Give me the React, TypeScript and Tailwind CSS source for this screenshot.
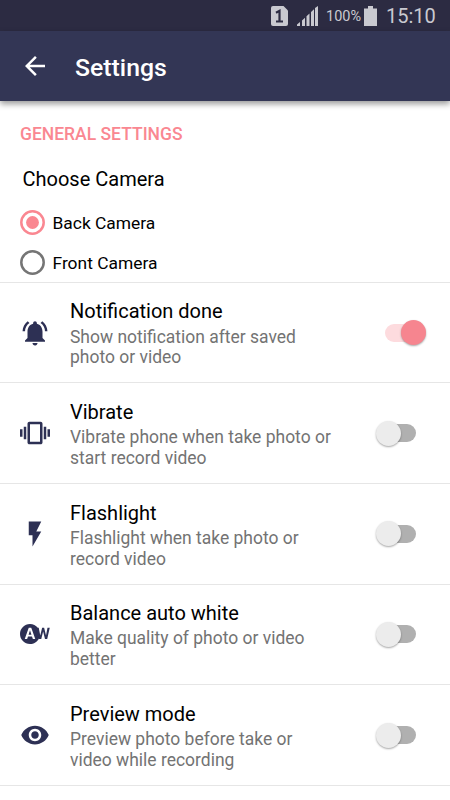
import { useState } from "react";
import type { IconType } from "react-icons";
import {
  MdArrowBack,
  MdFlashOn,
  MdNotificationsActive,
  MdVibration,
  MdVisibility,
  MdWbAuto,
} from "react-icons/md";

type Setting = {
  id: string;
  title: string;
  lines: [string, string];
  icon: IconType;
};

const settings: Setting[] = [
  { id: "notification", title: "Notification done", lines: ["Show notification after saved", "photo or video"], icon: MdNotificationsActive },
  { id: "vibrate", title: "Vibrate", lines: ["Vibrate phone when take photo or", "start record video"], icon: MdVibration },
  { id: "flash", title: "Flashlight", lines: ["Flashlight when take photo or", "record video"], icon: MdFlashOn },
  { id: "white", title: "Balance auto white", lines: ["Make quality of photo or video", "better"], icon: MdWbAuto },
  { id: "preview", title: "Preview mode", lines: ["Preview photo before take or", "video while recording"], icon: MdVisibility },
];

const StatusBar = () => (
  <div className="flex h-[31px] items-center bg-[#2c2b42] pl-[271px] text-[#c9c9d0]">
    {/* SIM slot */}
    <svg className="shrink-0" width="17" height="20" viewBox="0 0 17 20">
      <path d="M2 0h10.5L17 4.5V18a2 2 0 0 1-2 2H2a2 2 0 0 1-2-2V2a2 2 0 0 1 2-2z" fill="currentColor" />
      <path d="M5 6.8L8.5 4.8V15.500M5 15.500H12" fill="none" stroke="#2c2b42" strokeWidth="2.2" />
    </svg>
    <svg className="ml-[9px] shrink-0" width="22" height="20" viewBox="0 0 22 20" fill="currentColor">
      <path d="M0 20v-1.500l3-2.500V20zM5 20v-5.500l3-2.800V20zM9.500 20v-9.800l3-2.800V20zM14 20V6l3-2.800V20zM18 20V2L21 0v20z" />
    </svg>
    <span className="ml-[7px] w-[35px] shrink-0 whitespace-nowrap pt-[2px] text-[14.5px] leading-[29px]">100%</span>
    <svg className="ml-[3px] shrink-0" width="13" height="20" viewBox="0 0 13 20" fill="currentColor">
      <path d="M4 0h5v2.500h4V20H0V2.500h4z" />
    </svg>
    <span className="ml-[9px] whitespace-nowrap pt-px text-[20px] leading-[30px]">15:10</span>
  </div>
);

const Radio = ({ label, checked, onSelect }: { label: string; checked: boolean; onSelect: () => void }) => (
  <button type="button" role="radio" aria-checked={checked} onClick={onSelect} className="flex h-10 items-center pl-5">
    <svg
      className={`size-[25px] ${checked ? "text-[#fa8791]" : "text-[#757575]"}`}
      viewBox="0 0 25 25"
      fill="none"
      stroke="currentColor"
      strokeWidth="2.500"
    >
      <circle cx="12.500" cy="12.500" r="11.200" />
      {checked && <circle cx="12.500" cy="12.500" r="6.400" fill="currentColor" stroke="none" />}
    </svg>
    <span className="ml-[7.5px] pt-[2px] text-[17.4px] leading-5 text-black">{label}</span>
  </button>
);

const Switch = ({ label, on, onToggle }: { label: string; on: boolean; onToggle: () => void }) => (
  <button
    type="button"
    role="switch"
    aria-label={label}
    aria-checked={on}
    onClick={onToggle}
    className={`mr-6 flex h-[26px] w-[52px] items-center ${on ? "justify-end" : "justify-start"}`}
  >
    <span
      className={`flex h-[18px] w-[32px] items-center rounded-full ${
        on ? "mr-[9px] justify-end bg-[#fddbde]" : "ml-[10px] justify-start bg-[#b0b0b0]"
      }`}
    >
      <span
        className={`size-[25px] shrink-0 rounded-full shadow-[0_1px_2px_rgba(0,0,0,0.35)] ${
          on ? "-mr-[9px] bg-[#f6858f]" : "-ml-[8px] bg-[#ececec]"
        }`}
      />
    </span>
  </button>
);

export default function App() {
  const [camera, setCamera] = useState("back");
  const [enabled, setEnabled] = useState<Record<string, boolean>>({ notification: true });

  return (
    <div className="flex h-[800px] w-[450px] flex-col overflow-hidden bg-white font-['Roboto',sans-serif]">
      <StatusBar />
      <header className="z-10 flex h-[70px] shrink-0 items-center bg-[#333655] text-white shadow-[0_3px_6px_rgba(0,0,0,0.4)]">
        <MdArrowBack className="ml-5 size-[30px]" />
        <h1 className="ml-[25px] pt-[3px] text-[24.8px] font-medium leading-[30px]">Settings</h1>
      </header>

      <section className="flex h-[181.7px] shrink-0 flex-col border-b border-[#e6e6e6] pt-[23px]">
        <h2 className="pl-5 text-[17.5px] font-medium leading-5 text-[#fa8791]">GENERAL SETTINGS</h2>
        <h3 className="mb-[11px] mt-[23px] pl-[22.5px] text-[20px] leading-6 text-black">Choose Camera</h3>
        <div role="radiogroup" className="flex flex-col">
          <Radio label="Back Camera" checked={camera === "back"} onSelect={() => setCamera("back")} />
          <Radio label="Front Camera" checked={camera === "front"} onSelect={() => setCamera("front")} />
        </div>
      </section>

      {settings.map(({ id, title, lines, icon: Icon }) => (
        <div key={id} className="flex h-[100.65px] shrink-0 items-center border-b border-[#e6e6e6]">
          <Icon className="ml-5 size-[30px] shrink-0 text-[#2d3054]" />
          <div className="ml-5 flex-1 pt-[1.4px]">
            <p className="mb-[2.2px] text-[20px] leading-[26px] text-black">{title}</p>
            <p className="whitespace-nowrap text-[17.48px] leading-[20.8px] text-[#737373]">
              {lines[0]}
              <br />
              {lines[1]}
            </p>
          </div>
          <Switch
            label={title}
            on={!!enabled[id]}
            onToggle={() => setEnabled((prev) => ({ ...prev, [id]: !prev[id] }))}
          />
        </div>
      ))}
    </div>
  );
}
